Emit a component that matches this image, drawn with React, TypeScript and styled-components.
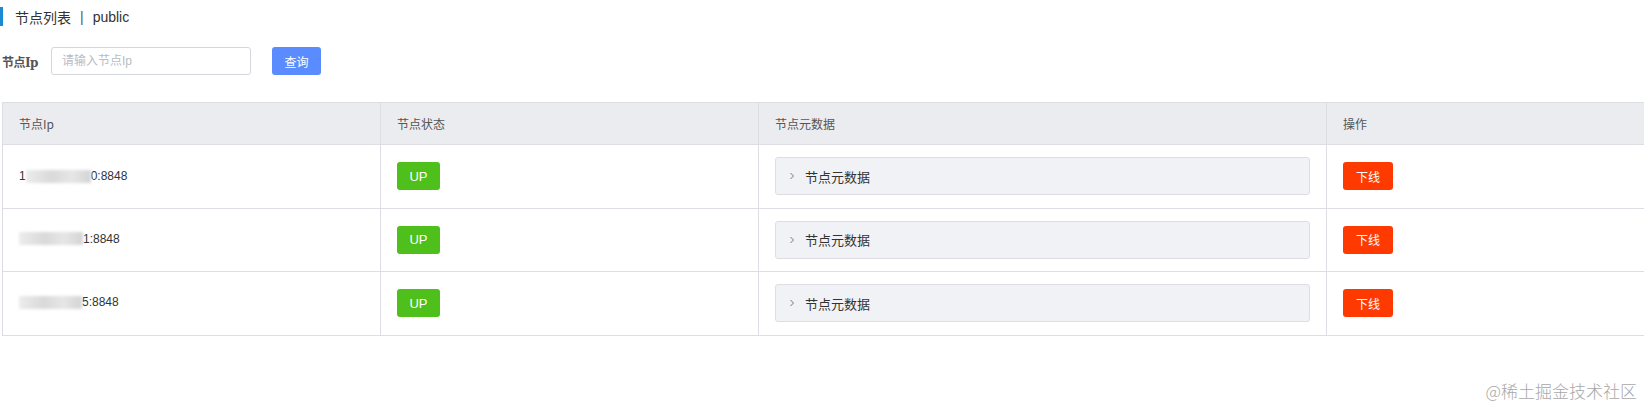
import React from "react";
import styled, { createGlobalStyle } from "styled-components";

const GlobalStyle = createGlobalStyle`
  html, body {
    margin: 0;
    padding: 0;
    background: #fff;
    overflow: hidden;
  }
  body {
    font-family: "Liberation Sans", "Noto Sans CJK SC", sans-serif;
    color: #333;
  }
`;

const Page = styled.div`
  position: relative;
  width: 1644px;
  height: 409px;
  padding-top: 7px;
  box-sizing: border-box;
`;

const TitleBar = styled.div`
  display: flex;
  align-items: center;
  height: 19px;
  border-left: 3px solid #1a8ad4;
  padding-left: 12px;
  font-size: 14px;
  color: #333;
  gap: 9px;
`;

const Sep = styled.span`
  color: #555;
`;

const FilterRow = styled.div`
  display: flex;
  align-items: center;
  margin-top: 21px;
  height: 28px;
  padding-left: 2px;
`;

const FilterLabel = styled.label`
  font-family: "DejaVu Serif", "Noto Sans CJK SC", serif;
  font-weight: bold;
  font-size: 12px;
  color: #555;
  width: 49px;
  letter-spacing: -0.5px;
`;

const TextInput = styled.input`
  box-sizing: border-box;
  width: 200px;
  height: 28px;
  border: 1px solid #d4d6db;
  border-radius: 3px;
  padding: 0 10px;
  font-size: 12px;
  font-family: "Liberation Sans", "Noto Sans CJK SC", sans-serif;
  outline: none;
  &::placeholder {
    color: #b8bcc4;
  }
`;

const PrimaryButton = styled.button`
  margin-left: 21px;
  width: 49px;
  height: 28px;
  border: none;
  border-radius: 3px;
  background: #5b8cff;
  color: #fff;
  font-size: 12px;
  font-family: "Noto Sans CJK SC", sans-serif;
  padding: 0;
`;

const TableWrap = styled.div`
  margin-top: 27px;
  margin-left: 2px;
`;

const Table = styled.table`
  border-collapse: collapse;
  width: 1660px;
  table-layout: fixed;
  font-size: 12px;
`;

const HeadCell = styled.th<{ $w?: number }>`
  width: ${(p) => (p.$w ? `${p.$w}px` : "auto")};
  height: 42px;
  background: #ebecf0;
  border: 1px solid #dcdee3;
  text-align: left;
  font-weight: normal;
  color: #555;
  padding: 0 16px;
  box-sizing: border-box;
  font-family: "Noto Sans CJK SC", sans-serif;
  font-size: 12px;
`;

const Cell = styled.td`
  height: 63.5px;
  border: 1px solid #dcdee3;
  padding: 0 16px;
  box-sizing: border-box;
  color: #333;
  font-size: 12px;
  vertical-align: middle;
`;

const IpText = styled.span`
  display: inline-flex;
  align-items: center;
  font-family: "Liberation Sans", sans-serif;
  font-size: 12px;
`;

const Masked = styled.span<{ $w: number }>`
  display: inline-block;
  width: ${(p) => p.$w}px;
  height: 13px;
  background: linear-gradient(90deg, #ececec, #d9d9d9 40%, #e6e6e6 70%, #d4d4d4);
  filter: blur(1.5px);
`;

const StatusBadge = styled.span`
  display: inline-flex;
  align-items: center;
  justify-content: center;
  width: 43px;
  height: 28px;
  border-radius: 3px;
  background: #4fbf1b;
  color: #fff;
  font-size: 13px;
  font-family: "Liberation Sans", sans-serif;
`;

const Collapse = styled.div`
  display: flex;
  align-items: center;
  height: 38px;
  box-sizing: border-box;
  border: 1px solid #dcdee3;
  border-radius: 3px;
  background: #f1f2f5;
  padding-left: 12px;
  gap: 9px;
  font-family: "Noto Sans CJK SC", sans-serif;
  font-size: 13px;
  color: #333;
`;

const Chevron = styled.svg`
  width: 8px;
  height: 8px;
  flex: none;
`;

const DangerButton = styled.button`
  width: 50px;
  height: 28px;
  border: none;
  border-radius: 3px;
  background: #ff3a00;
  color: #fff;
  font-size: 12px;
  font-family: "Noto Sans CJK SC", sans-serif;
  padding: 0;
`;

const Watermark = styled.div`
  position: absolute;
  right: 7px;
  bottom: 6px;
  font-size: 17px;
  color: #a8a8a8;
  font-family: "Noto Sans CJK SC", sans-serif;
  font-weight: 300;
`;

type Row = { pre: string; mask: number; post: string };

const rows: Row[] = [
  { pre: "1", mask: 65, post: "0:8848" },
  { pre: "", mask: 64, post: "1:8848" },
  { pre: "", mask: 63, post: "5:8848" },
];

export default function App() {
  return (
    <>
      <GlobalStyle />
      <Page>
        <TitleBar>
          <span>节点列表</span>
          <Sep>|</Sep>
          <span>public</span>
        </TitleBar>
        <FilterRow>
          <FilterLabel>节点Ip</FilterLabel>
          <TextInput placeholder="请输入节点Ip" />
          <PrimaryButton>查询</PrimaryButton>
        </FilterRow>
        <TableWrap>
          <Table>
            <thead>
              <tr>
                <HeadCell $w={378}>节点Ip</HeadCell>
                <HeadCell $w={378}>节点状态</HeadCell>
                <HeadCell $w={568}>节点元数据</HeadCell>
                <HeadCell>操作</HeadCell>
              </tr>
            </thead>
            <tbody>
              {rows.map((r, i) => (
                <tr key={i}>
                  <Cell>
                    <IpText>
                      {r.pre}
                      <Masked $w={r.mask} />
                      {r.post}
                    </IpText>
                  </Cell>
                  <Cell>
                    <StatusBadge>UP</StatusBadge>
                  </Cell>
                  <Cell>
                    <Collapse>
                      <Chevron viewBox="0 0 8 8">
                        <path d="M2.5 1 L5.5 4 L2.5 7" fill="none" stroke="#777" strokeWidth="1" />
                      </Chevron>
                      <span>节点元数据</span>
                    </Collapse>
                  </Cell>
                  <Cell>
                    <DangerButton>下线</DangerButton>
                  </Cell>
                </tr>
              ))}
            </tbody>
          </Table>
        </TableWrap>
        <Watermark>@稀土掘金技术社区</Watermark>
      </Page>
    </>
  );
}
